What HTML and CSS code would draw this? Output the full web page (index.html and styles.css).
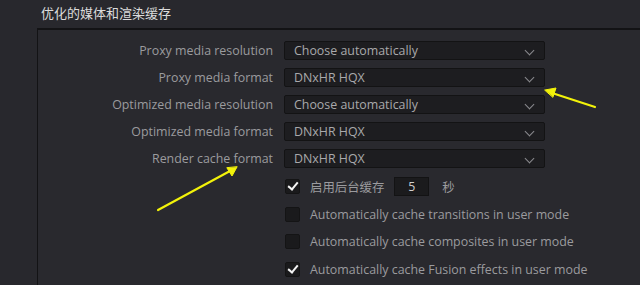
FILE: index.html
```html
<!DOCTYPE html>
<html>
<head>
<meta charset="utf-8">
<title>优化的媒体和渲染缓存</title>
<link rel="stylesheet" href="styles.css">
</head>
<body>
<div class="title">优化的媒体和渲染缓存</div>
<div class="group">
	<div class="form">
		<div class="label">Proxy media resolution</div>
		<div class="select">Choose automatically<span class="chev"></span></div>
		<div class="label">Proxy media format</div>
		<div class="select">DNxHR HQX<span class="chev"></span></div>
		<div class="label">Optimized media resolution</div>
		<div class="select">Choose automatically<span class="chev"></span></div>
		<div class="label">Optimized media format</div>
		<div class="select">DNxHR HQX<span class="chev"></span></div>
		<div class="label">Render cache format</div>
		<div class="select">DNxHR HQX<span class="chev"></span></div>
	</div>
	<div class="checks">
		<div class="check on"><span class="box"></span>启用后台缓存<span class="num">5</span><span class="unit">秒</span></div>
		<div class="check"><span class="box"></span>Automatically cache transitions in user mode</div>
		<div class="check"><span class="box"></span>Automatically cache composites in user mode</div>
		<div class="check on"><span class="box"></span>Automatically cache Fusion effects in user mode</div>
	</div>
</div>
<svg class="notes" width="640" height="285" viewBox="0 0 640 285">
	<g stroke="#f2f20a" stroke-width="2.2" fill="#f2f20a" stroke-linecap="round">
		<line x1="595" y1="107" x2="552" y2="93"/>
		<polygon points="545,90 556,88 553,97" stroke-width="1"/>
		<line x1="158" y1="210" x2="230" y2="171"/>
		<polygon points="237,167 232,176 227,168" stroke-width="1"/>
	</g>
</svg>
</body>
</html>
```
FILE: styles.css
```css
html{overflow:hidden;}
body{margin:0; background:#28282d; font-family:"Open Sans","Noto Sans CJK SC",sans-serif; font-size:12.4px; color:#9b9b9e; position:relative; height:285px;}
.title{height:28px; line-height:26px; padding-left:41px; color:#dcdcdc; font-family:"Noto Sans CJK SC",sans-serif; font-size:13px;}
.group{margin-left:37px; border-top:2px solid #131315; border-left:1px solid #131315; height:260px; background:#29292e;}
.form{display:grid; grid-template-columns:235px 261px; column-gap:11px; row-gap:8px; padding-top:11px; grid-auto-rows:19px;}
.label{text-align:right; line-height:19px; white-space:nowrap;}
.select{position:relative; background:#1d1d20; border:1px solid #131314; border-radius:2px; box-sizing:border-box; line-height:17px; padding-left:9px; color:#a9a9ab;}
.chev{position:absolute; right:11px; top:5px; width:6px; height:6px; border-right:1.5px solid #8a8a8d; border-bottom:1.5px solid #8a8a8d; transform:rotate(45deg);}
.checks{display:flex; flex-direction:column; gap:8.5px; padding-top:9px; padding-left:247px;}
.check{display:flex; align-items:center; height:19px; white-space:nowrap;}
.box{position:relative; width:13px; height:13px; background:#1a1a1c; border:1px solid #141415; border-radius:2px; margin-right:10px;}
.check.on .box::after{content:""; position:absolute; left:4px; top:0px; width:4px; height:8px; border-right:2px solid #f4f4f4; border-bottom:2px solid #f4f4f4; transform:rotate(40deg);}
.num{width:35px; height:19px; box-sizing:border-box; margin-left:10px; background:#1b1b1d; border:1px solid #131314; text-align:center; line-height:17px; color:#d0d0d0;}
.unit{margin-left:13px; font-family:"Noto Sans CJK SC",sans-serif;}
.notes{position:absolute; left:0; top:0;}
```
